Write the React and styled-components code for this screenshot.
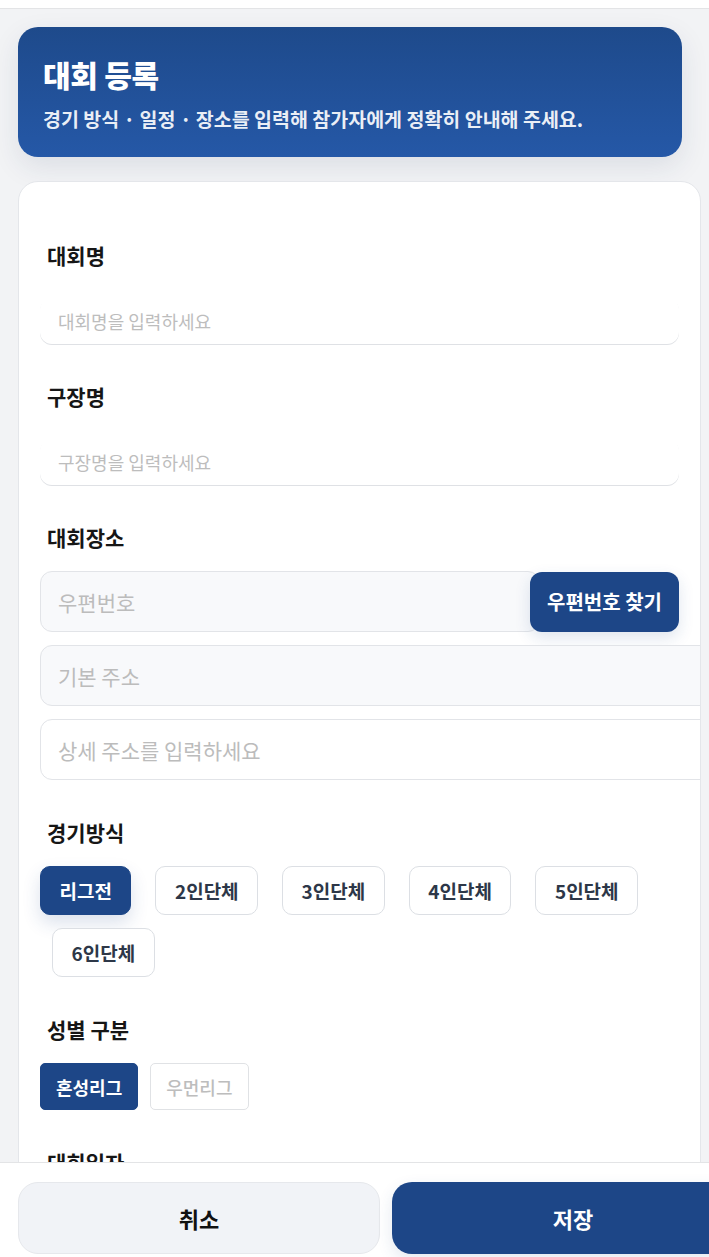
import React, { useState } from "react";
import styled, { createGlobalStyle } from "styled-components";

const GlobalStyle = createGlobalStyle`
  html, body {
    margin: 0;
    padding: 0;
    overflow: hidden;
    background: #f2f3f5;
    font-family: "Noto Sans CJK KR", "Noto Sans", sans-serif;
  }
  * {
    box-sizing: border-box;
  }
`;

const GAME_TYPES = ["리그전", "2인단체", "3인단체", "4인단체", "5인단체", "6인단체"];
const GENDERS = ["혼성리그", "우먼리그"];

export default function App() {
  const [gameType, setGameType] = useState("리그전");
  const [gender, setGender] = useState("혼성리그");
  const [name, setName] = useState("");
  const [venue, setVenue] = useState("");
  const [detail, setDetail] = useState("");

  return (
    <>
      <GlobalStyle />
      <Page>
        <TopBar />
        <Content>
          <Hero>
            <HeroTitle>대회 등록</HeroTitle>
            <HeroText>경기 방식 · 일정 · 장소를 입력해 참가자에게 정확히 안내해 주세요.</HeroText>
          </Hero>

          <FormCard>
            <Field>
              <Label>대회명</Label>
              <LineInput
                value={name}
                onChange={(e) => setName(e.target.value)}
                placeholder="대회명을 입력하세요"
              />
            </Field>
            <Field>
              <Label>구장명</Label>
              <LineInput
                value={venue}
                onChange={(e) => setVenue(e.target.value)}
                placeholder="구장명을 입력하세요"
              />
            </Field>
            <Field>
              <Label>대회장소</Label>
              <AddressStack>
                <ZipRow>
                  <BoxInput $readOnly readOnly placeholder="우편번호" />
                  <ZipButton type="button">우편번호 찾기</ZipButton>
                </ZipRow>
                <BoxInput $readOnly $wide readOnly placeholder="기본 주소" />
                <BoxInput
                  $wide
                  value={detail}
                  onChange={(e) => setDetail(e.target.value)}
                  placeholder="상세 주소를 입력하세요"
                />
              </AddressStack>
            </Field>
            <Field>
              <Label>경기방식</Label>
              <ChipRow>
                {GAME_TYPES.map((t) => (
                  <Chip
                    key={t}
                    type="button"
                    $active={gameType === t}
                    onClick={() => setGameType(t)}
                  >
                    {t}
                  </Chip>
                ))}
              </ChipRow>
            </Field>
            <Field>
              <Label>성별 구분</Label>
              <ToggleRow>
                {GENDERS.map((g) => (
                  <Toggle
                    key={g}
                    type="button"
                    $active={gender === g}
                    onClick={() => setGender(g)}
                  >
                    {g}
                  </Toggle>
                ))}
              </ToggleRow>
            </Field>
            <Field>
              <Label>대회일자</Label>
              <BoxInput $wide type="date" />
            </Field>
          </FormCard>
        </Content>

        <ActionBar>
          <CancelButton type="button">취소</CancelButton>
          <SaveButton type="button">저장</SaveButton>
        </ActionBar>
      </Page>
    </>
  );
}

const Page = styled.div`
  width: 100%;
  min-height: 100vh;
  background: #f2f3f5;
`;

const TopBar = styled.div`
  height: 9px;
  background: #ffffff;
  border-bottom: 1px solid #e3e4e6;
`;

const Content = styled.div`
  display: flex;
  flex-direction: column;
  padding: 18px 0 140px 18px;
`;

const Hero = styled.div`
  width: 664px;
  height: 130px;
  padding: 28px 25px 0;
  border-radius: 20px;
  background: linear-gradient(180deg, #1e4a8b 0%, #2558a7 100%);
  box-shadow: 0 10px 28px rgba(30, 50, 90, 0.1);
  color: #ffffff;
`;

const HeroTitle = styled.h1`
  margin: 0;
  font-size: 30px;
  line-height: 38px;
  font-weight: 900;
  letter-spacing: -0.3px;
`;

const HeroText = styled.p`
  margin: 13px 0 0;
  font-size: 19.5px;
  line-height: 26px;
  font-weight: 700;
  color: rgba(255, 255, 255, 0.92);
`;

const FormCard = styled.div`
  width: 683px;
  margin-top: 24px;
  padding: 60px 21px 40px;
  background: #ffffff;
  border: 1px solid #e4e6ea;
  border-radius: 20px;
  overflow: hidden;
  display: flex;
  flex-direction: column;
  gap: 39px;
`;

const Field = styled.div`
  display: flex;
  flex-direction: column;
`;

const Label = styled.label`
  padding-left: 7px;
  margin-bottom: 21px;
  font-size: 21px;
  line-height: 26px;
  font-weight: 700;
  color: #161616;
`;

const LineInput = styled.input`
  width: 100%;
  height: 46px;
  margin-top: 9px;
  padding: 0 18px;
  border: none;
  border-radius: 12px;
  box-shadow: 0 1px 0 #dfe1e5;
  background: #ffffff;
  font-family: inherit;
  font-size: 18px;
  color: #222;
  outline: none;
  &::placeholder {
    color: #bdbdbd;
  }
`;

const AddressStack = styled.div`
  display: flex;
  flex-direction: column;
  gap: 13px;
`;

const ZipRow = styled.div`
  display: flex;
  align-items: center;
`;

const BoxInput = styled.input`
  flex: ${(p) => (p.$wide ? "none" : "1")};
  width: ${(p) => (p.$wide ? "680px" : "auto")};
  min-width: 0;
  height: 61px;
  padding: 0 17px;
  border: 1px solid #e2e4e8;
  border-radius: 12px;
  background: ${(p) => (p.$readOnly ? "#f8f9fb" : "#ffffff")};
  font-family: inherit;
  font-size: 21px;
  color: #222;
  outline: none;
  &::placeholder {
    color: #bcbcbc;
  }
`;

const ZipButton = styled.button`
  flex-shrink: 0;
  width: 149px;
  height: 60px;
  margin-left: -10px;
  border: none;
  border-radius: 12px;
  background: #1d4687;
  box-shadow: 0 6px 16px rgba(29, 70, 135, 0.14);
  color: #ffffff;
  font-family: inherit;
  font-size: 20px;
  font-weight: 700;
  cursor: pointer;
`;

const ChipRow = styled.div`
  display: flex;
  flex-wrap: wrap;
  row-gap: 13px;
`;

const Chip = styled.button`
  height: 49px;
  padding: 0 18.5px;
  margin: 0 12px;
  border-radius: 10px;
  border: 1px solid ${(p) => (p.$active ? "#1d4687" : "#dcdfe4")};
  background: ${(p) => (p.$active ? "#1d4687" : "#ffffff")};
  box-shadow: ${(p) => (p.$active ? "0 8px 18px rgba(29, 70, 135, 0.16)" : "none")};
  color: ${(p) => (p.$active ? "#ffffff" : "#2d3748")};
  font-family: inherit;
  font-size: 19px;
  font-weight: 700;
  cursor: pointer;
  &:first-child {
    margin-left: 0;
  }
`;

const ToggleRow = styled.div`
  display: flex;
  gap: 12px;
`;

const Toggle = styled.button`
  height: 47px;
  padding: 0 15px;
  border-radius: 5px;
  border: 1px solid ${(p) => (p.$active ? "#1d4687" : "#e0e2e5")};
  background: ${(p) => (p.$active ? "#1d4687" : "#ffffff")};
  color: ${(p) => (p.$active ? "#ffffff" : "#bdbdbd")};
  font-family: inherit;
  font-size: 18px;
  font-weight: ${(p) => (p.$active ? 700 : 500)};
  cursor: pointer;
`;

const ActionBar = styled.div`
  position: fixed;
  left: 0;
  bottom: 0;
  height: 95px;
  width: 800px;
  display: flex;
  gap: 12px;
  padding: 19px 0 0 18px;
  background: #ffffff;
  border-top: 1px solid #e3e4e6;
`;

const BarButton = styled.button`
  flex-shrink: 0;
  width: 362px;
  height: 72px;
  border-radius: 20px;
  font-family: inherit;
  font-size: 22px;
  font-weight: 700;
  cursor: pointer;
`;

const CancelButton = styled(BarButton)`
  border: 1px solid #e6e8ec;
  background: #f1f3f7;
  color: #111111;
`;

const SaveButton = styled(BarButton)`
  border: none;
  background: #1d4687;
  box-shadow: 0 6px 16px rgba(29, 70, 135, 0.12);
  color: #ffffff;
`;
